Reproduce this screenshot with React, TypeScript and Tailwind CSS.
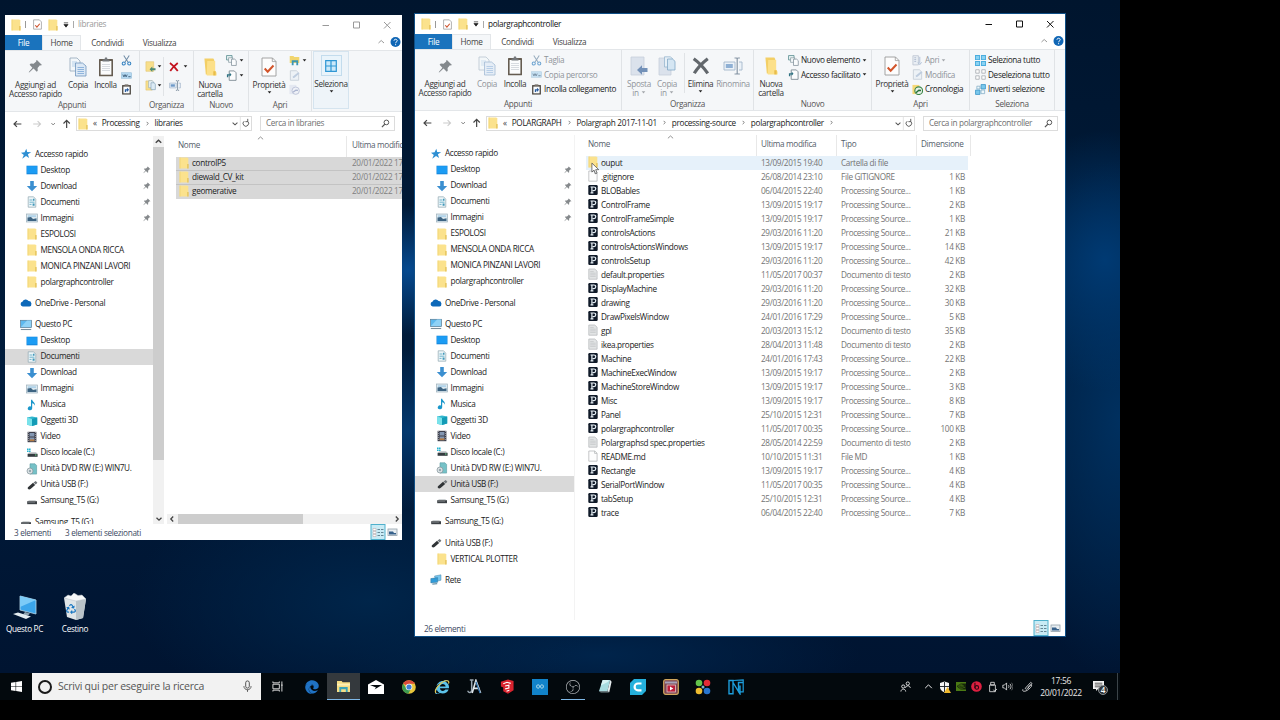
import type { ReactNode } from 'react'
import { FaEdge, FaInternetExplorer, FaRecycle } from 'react-icons/fa'
import { SiNvidia, SiObsstudio } from 'react-icons/si'

type IconName =
  | 'star' | 'desktop' | 'download' | 'document' | 'pictures' | 'folder' | 'cloud' | 'pc'
  | 'music' | 'cube' | 'video' | 'disk' | 'dvd' | 'usb' | 'drive' | 'network'
  | 'pde' | 'text' | 'blank'

function Icon({ name }: { name: IconName }) {
  const art: Record<IconName, ReactNode> = {
    star: <path d="M6.3.8 7.2 4l4 .2-3.3 2 1.2 3.9L6 8 2.2 10.7 3.8 6.9 1 4.8l3.6-.6z" fill="#2e8fd3" />,
    desktop: <><rect x="0.5" y="1.700" width="11" height="8.600" fill="#1787dc" /><rect x="1" y="2.2" width="10" height="7" fill="#1b9cf4" /></>,
    download: <path d="M4.2 1h3.6v5h3.4L6 11.2.8 6h3.4z" fill="#3b8fd0" />,
    document: <><path d="M2.2.8h5.4l2.2 2.4v8H2.2z" fill="#edf5f8" stroke="#8fa7b1" strokeWidth=".7" /><path d="M3.5 4h3M3.5 6.2h5M3.5 8.4h2" stroke="#6fb4cc" strokeWidth="1" /><path d="M6.6 7.4h2v2.4h-2zM7 2.8h1.5v2H7z" fill="#4197b8" /></>,
    pictures: <><rect x=".5" y="2" width="11" height="8" fill="#dce9f0" stroke="#9cb0bb" strokeWidth=".7" /><path d="M1.5 5.5 5 5l2 2 3.5-.8V9h-9z" fill="#3d6482" /><path d="M2 3.5h8v1.2H2z" fill="#9cc9e6" /></>,
    folder: <><path d="M1.600.6H9.300l1 1v9.900H1.600z" fill="#fbe28d" /><path d="M9.200 7h1.400v4.500H9.200z" fill="#e5c35a" /><path d="M1.600.6h.9v10.900h-.9z" fill="#f2d576" /></>,
    cloud: <path d="M2.7 9.5a2.4 2.4 0 0 1-.3-4.7A3.5 3.5 0 0 1 8.6 4a2.8 2.8 0 0 1 .8 5.5z" fill="#0d69b9" />,
    pc: <><rect x=".6" y="1.3" width="10.8" height="7.2" fill="#5db9ee" stroke="#5a7d94" strokeWidth=".7" /><path d="m1 8 6-6.4h4V8z" fill="#8fd2f6" /><path d="M.8 10.5h10.4" stroke="#7a8e9a" strokeWidth="1.1" /></>,
    music: <path d="M5 .8h1.2c.2 2 3.5 2.6 2.6 6-.3-1.6-1.4-2.3-2.6-2.5v5a2.2 2 0 1 1-1.2-1.8z" fill="#1a97cb" />,
    cube: <><path d="m1 2.5 5-1 5.2 1v7L6 11 1 9.8z" fill="#33b7cf" /><path d="M1 2.5 6 4v7L1 9.8z" fill="#79e2ea" /><path d="m6 4 5.2-1.5v7L6 11z" fill="#139bb6" /></>,
    video: <><rect x="1.6" y=".8" width="8.8" height="10.4" fill="#3d3f4c" /><path d="M3.6 2h4.8v3.4H3.6zM3.6 6.4h4.8v3.8H3.6z" fill="#8397b2" /><path d="M3.6 8.4h4.8v1.8H3.6z" fill="#b47a42" /><path d="M2.5 1v10M9.5 1v10" stroke="#c9c9cf" strokeWidth=".6" strokeDasharray="1 1" /></>,
    disk: <><path d="M1 1.5h1.6v1.6H1zM3 1.5h1.6v1.6H3zM1 3.5h1.6v1.6H1zM3 3.5h1.6v1.6H3z" fill="#22b2cf" /><path d="m2.5 6 1-.8h6.6l1 1.6H2z" fill="#b7bec2" /><path d="M1.6 6.8h10v3h-10z" fill="#343b40" /><path d="M9 8h1.5" stroke="#6de08b" /></>,
    dvd: <><path d="M4 .8h5l1.6 1.7v8.6H4z" fill="#75c1c7" stroke="#5c9aa3" strokeWidth=".6" /><circle cx="4" cy="8" r="3" fill="#d7dee2" stroke="#83939a" strokeWidth=".7" /><circle cx="4" cy="8" r="1" fill="#82979e" /></>,
    usb: <><path d="M2 8.200 7 3.700l2.200 2.200-4.700 4.200C2.900 11.100.8 9.600 2 8.200z" fill="#2f3336" /><path d="m7.500 3.400 2.200-1.300 1.700 1.700-1.700 1.800z" fill="#70767a" /></>,
    drive: <><path d="m2 5.8 1-.9h6.2l1 .9z" fill="#bfc4c7" /><path d="M1.2 6.2h9.8v3H1.2z" fill="#3c4145" /><path d="M2 7.3h7" stroke="#8c9194" strokeWidth=".6" /></>,
    network: <><path d="M4.5 2 11 .8v5.4L6 7.5z" fill="#76c5ee" stroke="#5089a8" strokeWidth=".5" /><path d="m.8 4.6 6.8-1v4.7L.8 8.9z" fill="#2f9bd9" stroke="#3c799b" strokeWidth=".5" /><path d="M2.3 10.2 7.2 9.6" stroke="#6a95ac" strokeWidth="1.2" /></>,
    pde: <><rect x="1.300" y="1" width="9.400" height="10" rx="1.2" fill="#101a28" /><path d="M3.5 3h3.3c2.6 0 2.6 3.6 0 3.6H5.7M4.9 3v5.8M3.5 8.9h2.9" fill="none" stroke="#e9f2f8" strokeWidth="1.2" /></>,
    text: <><path d="M1.8 1h6l2.3 2.2v8H1.8z" fill="#e2e4e5" stroke="#b3b6b8" strokeWidth=".7" /><path d="M3.2 3.6h3.5M3.2 5.2h5.5M3.2 6.8h5.5M3.2 8.4h5.5" stroke="#babdc0" strokeWidth=".6" /></>,
    blank: <path d="M1.8 1h6l2.3 2.2v8H1.8zM7.6 1v2.4h2.4" fill="#fdfdfd" stroke="#adb0b2" strokeWidth=".7" />,
  }
  return <svg viewBox="0 0 12 12" className="size-[12px] shrink-0">{art[name]}</svg>
}

const Caret = ({ className = 'text-[#222]' }: { className?: string }) => (
  <svg viewBox="0 0 6 4" className={`w-[5px] h-[3px] shrink-0 ${className}`}><path d="M.6.3h4.8L3 3.4z" fill="currentColor" /></svg>
)

const Pin = ({ className }: { className: string }) => (
  <svg viewBox="0 0 16 16" className={`shrink-0 ${className}`}>
    <path d="m9.5 1 5.4 5.4-1.4.5-.8-.2-2.5 2.8.2 2.9-1.1 1.2-3.4-3.4L1.6 14l-.8.3.3-.8 3.6-4.3-3-3L3 4.900l3 .2 2.800-2.500-.2-.8z" fill="currentColor" />
  </svg>
)

const CopyArt = ({ faded }: { faded?: boolean }) => (
  <svg viewBox="0 0 18 20" className={`w-[18px] h-[20px] ${faded ? 'opacity-60' : ''}`}>
    <path d="M1 1h7l3 3v10H1z" fill="#f3f7fa" stroke="#93a7ba" strokeWidth=".8" />
    <path d="M3 5h5M3 7h5M3 9h5" stroke="#9fc1e2" strokeWidth=".7" />
    <path d="M6.500 6h7l3.500 3v10H6.500z" fill="#dbe8f5" stroke="#6f94bd" strokeWidth=".8" />
    <path d="M8.500 10.500h6.500M8.500 12.500h6.500M8.500 14.500h6.500M8.500 16.500h6.500" stroke="#86aed9" strokeWidth=".9" />
  </svg>
)

const PasteArt = () => (
  <svg viewBox="0 0 16 20" className="w-[16px] h-[20px]">
    <rect x="1" y="2" width="14" height="17.300" rx=".6" fill="#655c51" />
    <rect x="2.600" y="4" width="10.800" height="13.700" fill="#fbfcfd" />
    <path d="M4.500 2.500h2L7 .6h2l.5 1.900h2v2h-7z" fill="#75797d" />
    <path d="M4 7.500h8M4 9.500h8M4 11.500h8M4 13.500h8" stroke="#c7cdd2" strokeWidth=".7" />
  </svg>
)

const NewFolderArt = () => (
  <svg viewBox="0 0 16 20" className="w-[15px] h-[20px]">
    <path d="M1.500 1h9.500l1 1.500V18H3z" fill="#f3cf66" />
    <path d="M4.500 3.500H13V14l1.500 2v3H4z" fill="#fce089" />
    <path d="M11 14.500h2.500V19H11z" fill="#e8bd4a" />
  </svg>
)

const PropertiesArt = () => (
  <svg viewBox="0 0 16 20" className="w-[16px] h-[20px]">
    <path d="M1 1h10.500L15 4.500V19H1z" fill="#fdfdfd" stroke="#9a9a9a" strokeWidth=".9" />
    <path d="M11.300 1v3.600H15" fill="none" stroke="#9a9a9a" strokeWidth=".8" />
    <path d="m3.700 11.500 3 3.200 5.800-6.200" fill="none" stroke="#d2542a" strokeWidth="2" />
  </svg>
)

const MoveArt = () => (
  <svg viewBox="0 0 18 20" className="w-[18px] h-[20px]">
    <path d="M1 1h13v18H1z" fill="#dbe2ec" stroke="#c6cfdc" strokeWidth=".8" />
    <path d="m7 14 5-4.800v2.800h5.500v4H12v2.800z" fill="#7391b8" />
  </svg>
)

const CopyToArt = () => (
  <svg viewBox="0 0 18 20" className="w-[18px] h-[20px]">
    <path d="M1 2h12v17H1z" fill="#dbe2ec" stroke="#c6cfdc" strokeWidth=".8" />
    <path d="M6.500.8h6l2 2V11h-8z" fill="#e7f0f7" stroke="#98b6ce" strokeWidth=".8" />
    <path d="M9.500 3h5l2.500 2.300V14H9.500z" fill="#d5e6f3" stroke="#83a8c6" strokeWidth=".8" />
  </svg>
)

const DeleteArt = ({ className }: { className: string }) => (
  <svg viewBox="0 0 16 16" className={className}><path d="M1.500 1.500c5 3.500 9 8 12.500 13M14 1.500C9.500 5 5 9.500 2 14.500" fill="none" stroke="currentColor" strokeWidth="2.800" /></svg>
)

const RenameArt = ({ className }: { className: string }) => (
  <svg viewBox="0 0 20 18" className={className}>
    <path d="M1 5h11v8H1zM16 5h3v8h-3" fill="#eaf1f8" stroke="#8ba3bd" strokeWidth=".9" />
    <path d="M2.800 7h7v4h-7z" fill="#6e99c8" />
    <path d="M11.500 1h2l.7.700.7-.7h2M11.500 17h2l.7-.7.7.7h2M14.200 1.700v14.600" fill="none" stroke="#66798d" strokeWidth="1.200" />
  </svg>
)

type SmallName =
  | 'cut' | 'path' | 'pasteLink' | 'newItem' | 'easyAccess' | 'open' | 'openFolder' | 'edit' | 'history'
  | 'historyOff' | 'selectAll' | 'selectNone' | 'invert' | 'move' | 'copyTo'

function SmallArt({ name, className = 'size-[11px]' }: { name: SmallName; className?: string }) {
  const art: Record<SmallName, ReactNode> = {
    cut: <><path d="M3 .5 7.600 7.600M9 .5 4.400 7.600" stroke="#6e8ba5" strokeWidth="1.100" /><circle cx="3" cy="9.300" r="1.700" fill="none" stroke="#2f7fc0" strokeWidth="1.100" /><circle cx="9" cy="9.300" r="1.700" fill="none" stroke="#2f7fc0" strokeWidth="1.100" /></>,
    path: <><rect x=".5" y="3" width="11" height="6" fill="#b5d8f1" stroke="#8fb8d6" strokeWidth=".6" /><path d="m2 5 1.200 2.500L4.400 5l1.200 2.500L6.800 5M8 7.300h2.500" fill="none" stroke="#33536e" strokeWidth=".9" /></>,
    pasteLink: <><rect x="1.200" y="1.200" width="9.600" height="10.300" fill="#4a443d" /><rect x="2.600" y="2.800" width="6.800" height="7.400" fill="#f8fbfd" /><path d="M4 .4h4v1.800H4z" fill="#77716a" /><path d="M4.200 8.800V5.600h2.300V4l2.300 2.400-2.300 2.300V7.200H5.600v1.600z" fill="#2a5da0" /></>,
    newItem: <><path d="M.6.6h6v4.800h-6z" fill="#e9f3f3" stroke="#5b8f92" strokeWidth=".9" /><path d="M2.800 3h4.500v5H2.800z" fill="#f4f8fa" stroke="#7c9098" strokeWidth=".7" /><path d="M6 4.500h3.500l1.700 1.700v5.200H6z" fill="#fafcfd" stroke="#7b8b95" strokeWidth=".8" /></>,
    easyAccess: <><path d="M3.500 1h5.500l2 2v8.300H3.500z" fill="#fbfcfd" stroke="#75838c" strokeWidth=".9" /><path d="M1 8V4.500h3V2.800L6 5.200 4 7.400V6H2.500v2z" fill="#2f7282" /></>,
    open: <><path d="M1 .8h6v10H1z" fill="#e5ebf2" stroke="#9daabd" strokeWidth=".8" /><path d="M2.500 3h2M2.500 5h2M2.500 7h2" stroke="#8fa1bc" strokeWidth="1" /><path d="M8.500 2v7M6.500 8l2 2.500 2-2.500" fill="none" stroke="#8ca4c6" strokeWidth="1" /></>,
    openFolder: <><path d="M.8 1h4l1 1.300h5.400v6.500H.8z" fill="#f1d56d" /><path d="M3 5.600h7v5.600H8V8H5v3.200H3z" fill="#3c97b4" /></>,
    edit: <><path d="M1.500.8h6.500l2.500 2.400v8H1.500z" fill="#eaf0f6" stroke="#a8b5c2" strokeWidth=".8" /><path d="m4 9 .6-2.200L10 2.500l1.400 1.400L6 8.400z" fill="#a8bcd5" /></>,
    history: <><path d="M.5 1h7.500v10H.5z" fill="#f6d876" /><circle cx="7.300" cy="7.300" r="4.200" fill="#e9f1ea" stroke="#3b8649" strokeWidth="1.200" /><path d="M4.300 9.500 7.500 6.800l2.300.2" fill="none" stroke="#237135" strokeWidth="1.600" /></>,
    historyOff: <><path d="M.5 1h7.500v10H.5z" fill="#dde2ee" /><circle cx="7.300" cy="7.300" r="4" fill="#eceff7" stroke="#a4adca" strokeWidth="1" /><path d="M4.300 9 7.500 6.800l2.300.2" fill="none" stroke="#8d9abf" strokeWidth="1.400" /></>,
    selectAll: <><path d="M0 0h5.500v5.500H0zM6.500 0H12v5.500H6.500zM0 6.500h5.500V12H0zM6.500 6.500H12V12H6.500z" fill="#4badde" /><path d="M1 1h3.500v3.500H1zM7.500 1H11v3.500H7.500zM1 7.500h3.500V11H1zM7.500 7.500H11V11H7.500z" fill="#8bd2f2" /></>,
    selectNone: <path d="M.8.8h3.800v3.800H.8zM7.400.8h3.800v3.800H7.400zM.8 7.400h3.800v3.800H.8zM7.400 7.400h3.800v3.800H7.400z" fill="#fdfdfd" stroke="#9fa5aa" strokeWidth=".8" />,
    invert: <><path d="M6.600.6h4.800v4.800H6.600zM.6 6.600h4.800v4.800H.6z" fill="#7ac8ec" stroke="#3f98c9" strokeWidth=".9" /><path d="M2 2.400h3.400v3H2zM6.600 6.600h3.900v3.900H6.600z" fill="#eef7fb" stroke="#7eaac3" strokeWidth=".8" /></>,
    move: <><path d="M1 .8h8.500v10.400H1z" fill="#f8df8b" stroke="#dfc16a" strokeWidth=".6" /><path d="m5 9 3-3v1.800h3.500v2.400H8V12z" fill="#4b8a77" /></>,
    copyTo: <><path d="M1 1h7v10H1z" fill="#f8df8b" stroke="#dfc16a" strokeWidth=".6" /><path d="M4 .8h4l1.500 1.700v6H4z" fill="#edf4f8" stroke="#8fa9b8" strokeWidth=".7" /><path d="M6.500 3H10l1.300 1.500v6H6.500z" fill="#dcebf5" stroke="#7f9db3" strokeWidth=".7" /></>,
  }
  return <svg viewBox="0 0 12 12" className={`shrink-0 ${className}`}>{art[name]}</svg>
}

const GridArt = () => (
  <div className="flex size-[21px] items-center justify-center border border-[#c3dced] bg-[#e9f4fb]">
    <svg viewBox="0 0 12 12" className="size-[12px]"><path d="M.7.7h10.600v10.600H.7zM6 .7v10.600M.7 6h10.600" fill="#cbe9fa" stroke="#2f97d4" strokeWidth="1.200" /></svg>
  </div>
)

function BigButton({ art, lines, width, faded, caret, tailCaret }: {
  art: ReactNode; lines: string[]; width: string; faded?: boolean; caret?: boolean; tailCaret?: boolean
}) {
  return (
    <div className={`flex shrink-0 flex-col items-center ${width} ${faded ? 'text-[#8f9499]' : 'text-[#333]'}`}>
      <div className="flex h-[26px] items-center justify-center">{art}</div>
      {lines.map((line, i) => (
        <div key={line} className="flex h-[9px] items-center gap-[2px] leading-[9px] whitespace-nowrap">
          {line}
          {tailCaret && i === lines.length - 1 ? <Caret className="text-[#a3a7ab]" /> : null}
        </div>
      ))}
      {caret ? <div className="flex h-[7px] items-center"><Caret /></div> : null}
    </div>
  )
}

function SmallRow({ icon, label, faded, caret }: { icon: SmallName; label?: string; faded?: boolean; caret?: boolean }) {
  return (
    <div className={`flex h-[14.600px] items-center gap-[2px] whitespace-nowrap ${faded ? 'text-[#8f9499]' : 'text-[#222]'}`}>
      <div className={faded ? 'opacity-70' : ''}><SmallArt name={icon} /></div>
      {label}
      {caret ? <Caret className={faded ? 'text-[#a3a7ab]' : 'text-[#222]'} /> : null}
    </div>
  )
}

function Group({ label, width, children }: { label: string; width: string; children: ReactNode }) {
  return (
    <div className={`flex h-full shrink-0 flex-col border-r border-[#e0e3e6] ${width}`}>
      <div className="flex flex-1 pt-[3px]">{children}</div>
      <div className="h-[12px] text-center leading-[12px] text-[#555]">{label}</div>
    </div>
  )
}

function LibrariesRibbon() {
  return (
    <>
      <Group label="Appunti" width="w-[135px]">
        <BigButton art={<Pin className="size-[15px] text-[#84898d]" />} lines={['Aggiungi ad', 'Accesso rapido']} width="w-[61px]" />
        <BigButton art={<CopyArt />} lines={['Copia']} width="w-[24px]" />
        <BigButton art={<PasteArt />} lines={['Incolla']} width="w-[31px]" />
        <div className="flex flex-col"><SmallRow icon="cut" /><SmallRow icon="path" /><SmallRow icon="pasteLink" /></div>
      </Group>
      <Group label="Organizza" width="w-[54px]">
        <div className="my-[3px] flex w-[24px] flex-col justify-center gap-[8px] border-r border-[#e0e3e6] pl-[5px]">
          <div className="flex items-center gap-[1px]"><SmallArt name="move" /><Caret /></div>
          <div className="flex items-center gap-[1px]"><SmallArt name="copyTo" /><Caret /></div>
        </div>
        <div className="flex flex-col justify-center gap-[8px] pl-[5px]">
          <div className="flex items-center gap-[4px]"><DeleteArt className="size-[10px] text-[#c3131f]" /><Caret /></div>
          <RenameArt className="h-[11px] w-[12px]" />
        </div>
      </Group>
      <Group label="Nuovo" width="w-[55px]">
        <BigButton art={<NewFolderArt />} lines={['Nuova', 'cartella']} width="w-[32px]" />
        <div className="flex flex-col"><SmallRow icon="newItem" caret /><SmallRow icon="easyAccess" caret /></div>
      </Group>
      <Group label="Apri" width="w-[63px]">
        <BigButton art={<PropertiesArt />} lines={['Proprietà']} width="w-[40px]" caret />
        <div className="flex flex-col"><SmallRow icon="openFolder" caret /><SmallRow icon="edit" faded /><SmallRow icon="historyOff" faded /></div>
      </Group>
      <div className="ml-px h-[58px] w-[36px] self-start border border-[#d5e4ef] bg-[#eef4f9] pt-[1px]">
        <BigButton art={<GridArt />} lines={['Seleziona']} width="w-[34px]" caret />
      </div>
    </>
  )
}

function ControllerRibbon() {
  return (
    <>
      <Group label="Appunti" width="w-[207px]">
        <BigButton art={<Pin className="size-[15px] text-[#84898d]" />} lines={['Aggiungi ad', 'Accesso rapido']} width="w-[60px]" />
        <BigButton art={<CopyArt faded />} lines={['Copia']} width="w-[24px]" faded />
        <BigButton art={<PasteArt />} lines={['Incolla']} width="w-[32px]" />
        <div className="flex flex-col">
          <SmallRow icon="cut" label="Taglia" faded />
          <SmallRow icon="path" label="Copia percorso" faded />
          <SmallRow icon="pasteLink" label="Incolla collegamento" />
        </div>
      </Group>
      <Group label="Organizza" width="w-[132px]">
        <BigButton art={<MoveArt />} lines={['Sposta', 'in']} width="w-[34px]" faded tailCaret />
        <BigButton art={<CopyToArt />} lines={['Copia', 'in']} width="w-[22px]" faded tailCaret />
        <div className="ml-[6px] h-[40px] w-px bg-[#e0e3e6]" />
        <BigButton art={<DeleteArt className="size-[18px] text-[#62676c]" />} lines={['Elimina']} width="w-[31px]" caret />
        <BigButton art={<div className="opacity-75"><RenameArt className="h-[18px] w-[20px]" /></div>} lines={['Rinomina']} width="w-[34px]" faded />
      </Group>
      <Group label="Nuovo" width="w-[118px]">
        <BigButton art={<NewFolderArt />} lines={['Nuova', 'cartella']} width="w-[34px]" />
        <div className="flex flex-col"><SmallRow icon="newItem" label="Nuovo elemento" caret /><SmallRow icon="easyAccess" label="Accesso facilitato" caret /></div>
      </Group>
      <Group label="Apri" width="w-[98px]">
        <BigButton art={<PropertiesArt />} lines={['Proprietà']} width="w-[40px]" caret />
        <div className="flex flex-col"><SmallRow icon="open" label="Apri" faded caret /><SmallRow icon="edit" label="Modifica" faded /><SmallRow icon="history" label="Cronologia" /></div>
      </Group>
      <Group label="Seleziona" width="w-[85px]">
        <div className="flex flex-col pl-[5px]"><SmallRow icon="selectAll" label="Seleziona tutto" /><SmallRow icon="selectNone" label="Deseleziona tutto" /><SmallRow icon="invert" label="Inverti selezione" /></div>
      </Group>
    </>
  )
}

function TitleBar({ title, active }: { title: string; active?: boolean }) {
  return (
    <div className="flex h-[20px] shrink-0 items-center pl-[5px]">
      <Icon name="folder" />
      <div className="ml-[3px] h-[7px] w-px bg-[#999]" />
      <svg viewBox="0 0 12 14" className="ml-[7px] h-[11px] w-[9px]"><path d="M.8.8h7.700l2.700 2.700v9.700H.8z" fill="#fff" stroke="#8a8a8a" strokeWidth=".9" /><path d="m3 8 2.200 2.500L9 6" fill="none" stroke="#cf5530" strokeWidth="1.500" /></svg>
      <div className="ml-[5px]"><Icon name="folder" /></div>
      <svg viewBox="0 0 6 7" className="ml-[4px] h-[6px] w-[6px]"><path d="M.5 1h5M.6 3h4.800L3 6z" fill="#222" stroke="#222" strokeWidth=".8" /></svg>
      <div className="ml-[4px] h-[7px] w-px bg-[#aaa]" />
      <span className={`ml-[4px] ${active ? 'text-[#111]' : 'text-[#999]'}`}>{title}</span>
      <svg viewBox="0 0 70 10" className={`mr-[10px] ml-auto h-[10px] w-[70px] ${active ? 'text-[#111]' : 'text-[#999]'}`}>
        <path d="M.5 5.500H7M31.500 2h6v6h-6zM62 2l6.500 6.500M68.500 2 62 8.500" fill="none" stroke="currentColor" strokeWidth="1" />
      </svg>
    </div>
  )
}

function TabBar() {
  return (
    <div className="flex h-[15px] shrink-0 items-stretch leading-[16px] text-[#444]">
      <div className="w-[37px] bg-[#1a73bd] text-center text-white">File</div>
      <div className="w-[39px] border-x border-[#e3e6e9] border-t bg-[#f5f7f9] text-center leading-[14px]">Home</div>
      <div className="w-[53px] text-center">Condividi</div>
      <div className="w-[51px] text-center">Visualizza</div>
      <svg viewBox="0 0 24 12" className="mt-[1px] mr-[1px] ml-auto h-[12px] w-[24px]">
        <path d="m1.500 7 2.700-2.500L7 7" fill="none" stroke="#999" />
        <circle cx="18.500" cy="6" r="5" fill="#1066b5" />
        <path d="M17 4.700c0-2 3.200-1.900 3.200 0 0 1.200-1.600 1.200-1.600 2.500M18.600 8.200v1" fill="none" stroke="#fff" strokeWidth="1" />
      </svg>
    </div>
  )
}

function AddressBar({ crumbs, trailing, search, boxWidth, searchWidth }: {
  crumbs: string[]; trailing?: boolean; search: string; boxWidth: string; searchWidth: string
}) {
  return (
    <div className="flex h-[24px] shrink-0 items-center">
      <svg viewBox="0 0 64 12" className="ml-[8px] h-[12px] w-[63px]" fill="none">
        <path d="M8.500 6H1M4 3 1 6l3 3" stroke="#444" strokeWidth="1.200" />
        <path d="M20.500 6H28M25 3l3 3-3 3" stroke="#ccc" strokeWidth="1.100" />
        <path d="m39 5 1.800 2L42.600 5" stroke="#888" />
        <path d="M54.500 10V2.500M51.300 5.500l3.200-3.200 3.200 3.200" stroke="#444" strokeWidth="1.200" />
      </svg>
      <div className={`flex h-[15px] items-center border border-[#dcdcdc] text-[#1b1b1b] ${boxWidth}`}>
        <Icon name="folder" />
        <span className="mr-[5px] ml-[4px] text-[#444]">«</span>
        {crumbs.map((crumb, i) => (
          <span key={crumb} className="flex items-center whitespace-nowrap">
            {crumb}
            {i < crumbs.length - 1 || trailing ? (
              <svg viewBox="0 0 4 6" className="mx-[6px] h-[5px] w-[3px]"><path d="M.8.8 3 3 .8 5.200" fill="none" stroke="#555" strokeWidth="1" /></svg>
            ) : null}
          </span>
        ))}
        <svg viewBox="0 0 22 14" className="ml-auto h-[13px] w-[21px]" fill="none">
          <path d="m2.500 6 2.600 2.500L7.700 6" stroke="#555" strokeWidth="1.100" /><path d="M10.800 0v14" stroke="#e2e2e2" />
          <path d="M15 4.500a3 3 0 1 0 3.500 0M18.800 2v3h-2.500" stroke="#555" strokeWidth="1" />
        </svg>
      </div>
      <div className={`ml-[8px] flex h-[15px] items-center border border-[#dcdcdc] pr-[4px] pl-[5px] text-[#6f6f6f] ${searchWidth}`}>
        <span className="whitespace-nowrap">{search}</span>
        <svg viewBox="0 0 10 10" className="ml-auto size-[9px] shrink-0"><circle cx="6" cy="3.800" r="2.600" fill="none" stroke="#555" strokeWidth="1.100" /><path d="M4.200 5.800 1 9" stroke="#555" strokeWidth="1.300" /></svg>
      </div>
    </div>
  )
}

type NavItem = { icon: IconName; label: string; pinned?: boolean; root?: boolean }

const quickAccess: NavItem[] = [
  { icon: 'star', label: 'Accesso rapido', root: true },
  { icon: 'desktop', label: 'Desktop', pinned: true },
  { icon: 'download', label: 'Download', pinned: true },
  { icon: 'document', label: 'Documenti', pinned: true },
  { icon: 'pictures', label: 'Immagini', pinned: true },
  { icon: 'folder', label: 'ESPOLOSI' },
  { icon: 'folder', label: 'MENSOLA ONDA RICCA' },
  { icon: 'folder', label: 'MONICA PINZANI LAVORI' },
  { icon: 'folder', label: 'polargraphcontroller' },
]

const thisPc: NavItem[] = [
  { icon: 'pc', label: 'Questo PC', root: true },
  { icon: 'desktop', label: 'Desktop' },
  { icon: 'document', label: 'Documenti' },
  { icon: 'download', label: 'Download' },
  { icon: 'pictures', label: 'Immagini' },
  { icon: 'music', label: 'Musica' },
  { icon: 'cube', label: 'Oggetti 3D' },
  { icon: 'video', label: 'Video' },
  { icon: 'disk', label: 'Disco locale (C:)' },
  { icon: 'dvd', label: 'Unità DVD RW (E:) WIN7U.' },
  { icon: 'usb', label: 'Unità USB (F:)' },
  { icon: 'drive', label: 'Samsung_T5 (G:)' },
]

const baseSections: NavItem[][] = [
  quickAccess,
  [{ icon: 'cloud', label: 'OneDrive - Personal', root: true }],
  thisPc,
  [{ icon: 'drive', label: 'Samsung_T5 (G:)', root: true }],
]

const controllerSections: NavItem[][] = [
  ...baseSections,
  [{ icon: 'usb', label: 'Unità USB (F:)', root: true }, { icon: 'folder', label: 'VERTICAL PLOTTER' }],
  [{ icon: 'network', label: 'Rete', root: true }],
]

function NavPane({ sections, selected, width }: { sections: NavItem[][]; selected: string; width: string }) {
  return (
    <div className={`flex shrink-0 flex-col gap-[5.300px] overflow-hidden pt-[10.500px] text-[#1b1b1b] ${width}`}>
      {sections.map((items, s) => (
        <div key={s} className="shrink-0">
          {items.map((item) => (
            <div
              key={item.label}
              className={`flex h-[16px] items-center gap-[3px] pr-[2px] whitespace-nowrap ${item.root ? 'pl-[15px]' : 'pl-[20.500px]'} ${s === 2 && item.label === selected ? 'bg-[#d9d9d9]' : ''}`}
            >
              <Icon name={item.icon} />
              {item.label}
              {item.pinned ? <Pin className="ml-auto size-[8px] text-[#85898c]" /> : null}
            </div>
          ))}
        </div>
      ))}
    </div>
  )
}

const processing = 'Processing Source...'
const textDoc = 'Documento di testo'

const files: [IconName, string, string, string, string][] = [
  ['folder', 'ouput', '13/09/2015 19:40', 'Cartella di file', ''],
  ['blank', '.gitignore', '26/08/2014 23:10', 'File GITIGNORE', '1 KB'],
  ['pde', 'BLOBables', '06/04/2015 22:40', processing, '1 KB'],
  ['pde', 'ControlFrame', '13/09/2015 19:17', processing, '2 KB'],
  ['pde', 'ControlFrameSimple', '13/09/2015 19:17', processing, '1 KB'],
  ['pde', 'controlsActions', '29/03/2016 11:20', processing, '21 KB'],
  ['pde', 'controlsActionsWindows', '13/09/2015 19:17', processing, '14 KB'],
  ['pde', 'controlsSetup', '29/03/2016 11:20', processing, '42 KB'],
  ['text', 'default.properties', '11/05/2017 00:37', textDoc, '2 KB'],
  ['pde', 'DisplayMachine', '29/03/2016 11:20', processing, '32 KB'],
  ['pde', 'drawing', '29/03/2016 11:20', processing, '30 KB'],
  ['pde', 'DrawPixelsWindow', '24/01/2016 17:29', processing, '5 KB'],
  ['text', 'gpl', '20/03/2013 15:12', textDoc, '35 KB'],
  ['text', 'ikea.properties', '28/04/2013 11:48', textDoc, '2 KB'],
  ['pde', 'Machine', '24/01/2016 17:43', processing, '22 KB'],
  ['pde', 'MachineExecWindow', '13/09/2015 19:17', processing, '2 KB'],
  ['pde', 'MachineStoreWindow', '13/09/2015 19:17', processing, '3 KB'],
  ['pde', 'Misc', '13/09/2015 19:17', processing, '8 KB'],
  ['pde', 'Panel', '25/10/2015 12:31', processing, '7 KB'],
  ['pde', 'polargraphcontroller', '11/05/2017 00:35', processing, '100 KB'],
  ['text', 'Polargraphsd spec.properties', '28/05/2014 22:59', textDoc, '2 KB'],
  ['blank', 'README.md', '10/10/2015 11:31', 'File MD', '1 KB'],
  ['pde', 'Rectangle', '13/09/2015 19:17', processing, '4 KB'],
  ['pde', 'SerialPortWindow', '11/05/2017 00:35', processing, '4 KB'],
  ['pde', 'tabSetup', '25/10/2015 12:31', processing, '4 KB'],
  ['pde', 'trace', '06/04/2015 22:40', processing, '7 KB'],
]

const SortMark = () => (
  <svg viewBox="0 0 8 4" className="absolute top-0 left-[81px] h-[4px] w-[7px]"><path d="m1 3.500 3-2.700 3 2.700" fill="none" stroke="#777" strokeWidth=".9" /></svg>
)

function ControllerFiles() {
  return (
    <div className="flex-1 border-l border-[#f3f3f3] pl-[11px]">
      <div className="relative grid h-[21px] w-[385px] grid-cols-[171px_80px_80px_54px] leading-[17px] text-[#55606b]">
        <SortMark />
        <div className="border-r border-[#e8e8e8] pl-[2px]">Nome</div>
        <div className="border-r border-[#e8e8e8] pl-[4px]">Ultima modifica</div>
        <div className="border-r border-[#e8e8e8] pl-[4px]">Tipo</div>
        <div className="border-r border-[#e8e8e8] pl-[4px]">Dimensione</div>
      </div>
      {files.map(([icon, name, date, type, size], i) => (
        <div key={name} className={`grid h-[14px] w-[382px] grid-cols-[175px_80px_77px_47px] items-center whitespace-nowrap text-[#747474] ${i === 0 ? 'bg-[#e6f1fa]' : ''}`}>
          <div className="flex items-center gap-[2px] pl-[1px] text-[#1b1b1b]"><div className="-mt-px"><Icon name={icon} /></div>{name}</div>
          <div>{date}</div>
          <div>{type}</div>
          <div className="text-right">{size}</div>
        </div>
      ))}
    </div>
  )
}

function LibraryFiles() {
  return (
    <div className="flex flex-1 flex-col overflow-hidden">
      <div className="ml-[12px] flex-1">
        <div className="relative grid h-[21px] grid-cols-[171px_1fr] leading-[17px] text-[#55606b]">
          <SortMark />
          <div className="border-r border-[#e8e8e8] pl-[2px]">Nome</div>
          <div className="overflow-hidden pl-[5px] whitespace-nowrap">Ultima modifica</div>
        </div>
        {['controlP5', 'diewald_CV_kit', 'geomerative'].map((name) => (
          <div key={name} className="grid h-[14px] grid-cols-[176px_1fr] items-center border-b border-[#c3c3c3] bg-[#d8d8d8] last:border-b-0">
            <div className="flex items-center gap-[2px] pl-[2px] text-[#1b1b1b]"><Icon name="folder" />{name}</div>
            <div className="overflow-hidden whitespace-nowrap text-[#808080]">20/01/2022 17:5</div>
          </div>
        ))}
      </div>
      <div className="ml-[3px] flex h-[10px] items-center justify-between bg-[#f1f1f1]">
        <svg viewBox="0 0 10 10" className="size-[10px]"><path d="M6.200 2.500 3.800 5l2.400 2.500" fill="none" stroke="#444" strokeWidth="1.300" /></svg>
        <div className="mr-auto ml-px h-full w-[125px] bg-[#cdcdcd]" />
        <svg viewBox="0 0 10 10" className="size-[10px]"><path d="M3.800 2.500 6.200 5 3.800 7.500" fill="none" stroke="#444" strokeWidth="1.300" /></svg>
      </div>
    </div>
  )
}

function StatusBar({ items }: { items: string[] }) {
  return (
    <div className="flex h-[16px] shrink-0 items-center gap-[14px] pl-[9px] text-[#3d4a63]">
      {items.map((item) => <span key={item} className="pt-[2px]">{item}</span>)}
      <svg viewBox="0 0 28 16" className="mr-[3px] ml-auto h-[16px] w-[29px]">
        <rect x=".5" y=".5" width="14" height="15" fill="#c9ebf5" stroke="#4fb0cc" />
        <path d="M2.500 4.500h3v2h-3zM2.500 7.500h3v2h-3zM2.500 10.500h3v2h-3z" fill="#fff" stroke="#b08c8c" strokeWidth=".4" />
        <path d="M7 5.500h2.500M10.500 5.500H13M7 8.500h2.500M10.500 8.500H13M7 11.500h2.500M10.500 11.500H13" stroke="#4b6d7d" strokeWidth=".8" />
        <rect x="17.500" y="5" width="9" height="6.500" fill="#e7edf1" stroke="#93a1ab" strokeWidth=".8" />
        <path d="M18.500 7.500h4l1 1.500h2v1.500h-7z" fill="#37618b" />
      </svg>
    </div>
  )
}

function VerticalScroll() {
  return (
    <div className="flex w-[11px] shrink-0 flex-col items-center bg-[#f1f1f1]">
      <svg viewBox="0 0 10 10" className="size-[11px]"><path d="M2.500 6.200 5 3.800l2.500 2.400" fill="none" stroke="#444" strokeWidth="1.300" /></svg>
      <div className="h-[313px] w-full bg-[#cdcdcd]" />
      <svg viewBox="0 0 10 10" className="mt-auto size-[10px]"><path d="M2.500 3.800 5 6.200l2.500-2.400" fill="none" stroke="#444" strokeWidth="1.300" /></svg>
    </div>
  )
}

function TaskButton({ children, className = '' }: { children: ReactNode; className?: string }) {
  return <div className={`flex h-[27px] w-[32.700px] shrink-0 items-center justify-center ${className}`}>{children}</div>
}

function Taskbar() {
  return (
    <div className="flex h-[27px] w-[1120px] items-center bg-[#03090d]">
      <div className="flex w-[32px] justify-center">
        <svg viewBox="0 0 12 12" className="size-[11px]"><path d="m0 1.800 5-.7v4.600H0zM5.600 1 12 0v5.700H5.600zM0 6.300h5V11l-5-.8zM5.600 6.300H12V12l-6.400-1z" fill="#fff" /></svg>
      </div>
      <div className="mr-px flex h-full w-[229px] items-center bg-[#f2f2f2] pl-[6px] text-[10.500px] tracking-[-0.250px] text-[#555]">
        <div className="mr-[6px] size-[14px] rounded-full border-[2px] border-[#1a1a1a]" />
        <span className="pt-px">Scrivi qui per eseguire la ricerca</span>
        <svg viewBox="0 0 10 14" className="mr-[9px] ml-auto h-[13px] w-[9px]" fill="none" stroke="#444"><rect x="3" y=".8" width="4" height="8" rx="2" /><path d="M1 6.500c0 5.500 8 5.500 8 0M5 10.500V13" strokeWidth=".9" /></svg>
      </div>
      <TaskButton className="pr-[2px]">
        <svg viewBox="0 0 12 12" className="size-[11px]" fill="none" stroke="#e8e8e8"><path d="M1 3.500h7v5H1zM1 .5v1.500h7V.5M1 11.500V10h7v1.500M10.800.5v11M10 4.500h1.600" /></svg>
      </TaskButton>
      <TaskButton className="pl-px"><FaEdge className="size-[14px] text-[#1f72c4]" /></TaskButton>
      <TaskButton className="border-b border-[#7fb9e8] bg-[#34393d]">
        <svg viewBox="0 0 16 14" className="h-[13px] w-[15px]"><path d="M1 1h5l1 1.500h8V13H1z" fill="#f6dd84" /><path d="M1 4h14v2H1z" fill="#fdf0b5" /><path d="M3.500 7.500h9V13h-2V10h-5v3h-2z" fill="#3ba4b8" /></svg>
      </TaskButton>
      <TaskButton>
        <svg viewBox="0 0 16 14" className="h-[14px] w-[16px]"><path d="M0 4.500 8 0l8 4.500V14H0z" fill="#fff" /><path d="M2 5h12L6.500 9.500 8 7.500z" fill="#03090d" /></svg>
      </TaskButton>
      <TaskButton>
        <svg viewBox="0 0 16 16" className="size-[14px]"><circle cx="8" cy="8" r="7.800" fill="#e8c63b" /><path d="M8 8 1.200 4.100A7.800 7.800 0 0 1 14.800 4.200H8z" fill="#d94b3d" /><path d="M1.200 4.100A7.800 7.800 0 0 0 7 15.700L10.500 10 6 11z" fill="#3d9b51" /><circle cx="8" cy="8" r="3.800" fill="#f4f4f4" /><circle cx="8" cy="8" r="2.900" fill="#3f7fd5" /></svg>
      </TaskButton>
      <TaskButton>
        <div className="relative"><FaInternetExplorer className="size-[14px] text-[#5cc3ea]" /><svg viewBox="0 0 16 16" className="absolute -top-px -left-px size-[16px]"><path d="M2 14C-1 11 9 0 14 2c1 .5 1 1.500.5 2.500" fill="none" stroke="#e9c64a" strokeWidth="1.100" /></svg></div>
      </TaskButton>
      <TaskButton>
        <svg viewBox="0 0 16 16" className="size-[15px]" fill="none"><path d="M5 1v11c0 3-4 3-4 .5M3 1h4" stroke="#9aa7b2" strokeWidth="1.600" /><path d="m5.500 15 4-13.500 5 13.500M7.500 10h6" stroke="#dfe7ec" strokeWidth="1.700" /><path d="m9.500 3 4.500 12" stroke="#2d6ea8" strokeWidth="1.400" /></svg>
      </TaskButton>
      <TaskButton>
        <svg viewBox="0 0 14 16" className="h-[15px] w-[14px]"><path d="m.5 3 7.500-2.500L14 2v10L8 15.800 3 13V9L.5 8z" fill="#d8232e" /><path d="m3 5 4-1.500 4 1.200M5 7.500l4-.8v3l-4 .8M6.500 13l3-1" fill="none" stroke="#fff" strokeWidth="1.200" /></svg>
      </TaskButton>
      <TaskButton>
        <div className="flex size-[16px] items-center justify-center bg-[#1183ca]"><svg viewBox="0 0 10 6" className="h-[5px] w-[8px]"><path d="M5 3C3-.5.8 1 .8 3S3 6.500 5 3s4.200-2 4.200 0S7 6.500 5 3" fill="none" stroke="#d6f2f5" strokeWidth="1.100" /></svg></div>
      </TaskButton>
      <TaskButton className="relative">
        <SiObsstudio className="size-[14px] text-[#b9bcbf]" />
        <div className="absolute bottom-0 h-px w-[24px] bg-[#7fb9e8]" />
      </TaskButton>
      <TaskButton>
        <svg viewBox="0 0 16 16" className="size-[15px]"><path d="M5 1h8l-3 12H1z" fill="#a7dce0" /><path d="m13 1 1.500 2-2.500 11-2-1z" fill="#e6edef" /><path d="M1 13h9l2 1.500H3z" fill="#7b8d92" /><path d="m5 1-2 6 8-4 .5-2z" fill="#d7f3f4" /></svg>
      </TaskButton>
      <TaskButton>
        <svg viewBox="0 0 16 16" className="size-[16px]"><path d="M4 0h12v12l-4 4H0V4z" fill="#25b0dc" /><path d="M11.500 4.500H8a3.400 3.400 0 0 0 0 6.800h3.500" fill="none" stroke="#fff" strokeWidth="2.200" /></svg>
      </TaskButton>
      <TaskButton>
        <svg viewBox="0 0 16 16" className="size-[16px]"><rect x=".7" y=".7" width="14.600" height="14.600" rx="2" fill="#7c4654" stroke="#d2a85e" strokeWidth="1.200" /><path d="M2 2.500h12v2H2z" fill="#a7a4bb" /><rect x="4" y="6" width="8.500" height="7" fill="#bc1f3a" stroke="#e1c6c6" strokeWidth=".8" /><path d="m7 7.500 3.300 2L7 11.500z" fill="#fff" /></svg>
      </TaskButton>
      <TaskButton>
        <svg viewBox="0 0 16 16" className="size-[16px]"><circle cx="4" cy="4" r="3.300" fill="#63c34b" /><circle cx="12" cy="4" r="3.300" fill="#e32c36" /><circle cx="4" cy="12" r="3.300" fill="#efbd30" /><circle cx="12" cy="12" r="3.300" fill="#2876cf" /><circle cx="8" cy="8" r="1.500" fill="#7db5c9" /></svg>
      </TaskButton>
      <TaskButton>
        <svg viewBox="0 0 16 16" className="size-[16px]" fill="none" stroke="#1d9ddb"><path d="M1 1.500h4v13.300H1zM5 3.500l5.500 9V3.500h4.700M10.500 12.500l1.500 2.300V6.500" strokeWidth="1.400" /><path d="M5 1.500 15.200 1v11.800H12" strokeWidth="1.200" /></svg>
      </TaskButton>

      <div className="ml-auto flex h-full items-center text-[#e8e8e8]">
        <svg viewBox="0 0 12 12" className="mr-[13px] size-[11px]" fill="none" stroke="currentColor"><circle cx="8.500" cy="2.800" r="1.800" /><path d="M6 7.500c.3-3 5-3 5.200 0" /><circle cx="3.500" cy="6" r="1.700" /><path d="M1 11.500C1.200 8 6 8 6.200 11.500" /></svg>
        <svg viewBox="0 0 10 6" className="mr-[6px] h-[5px] w-[9px]" fill="none" stroke="currentColor"><path d="m1 5 4-4 4 4" strokeWidth="1.200" /></svg>
        <svg viewBox="0 0 12 12" className="mr-[5px] size-[12px]"><path d="M5.500.5 10 2v4c0 3-2.500 4.500-4.500 5.500C3.500 10.500 1 9 1 6V2z" fill="#f4f4f4" /><path d="M5.500 1v10M1 5.500h9" stroke="#151b20" strokeWidth=".9" /><path d="m8.500 6 3.500 6H5z" fill="#f0b92d" /></svg>
        <div className="mr-[5px] flex h-[9px] w-[10px] items-center justify-center bg-[#4b7a14]"><SiNvidia className="size-[9px] text-[#16260a]" /></div>
        <svg viewBox="0 0 12 12" className="mr-[6px] size-[11px]"><circle cx="6" cy="6" r="5.800" fill="#dd1f40" /><path d="M4.300 2v5.500" stroke="#2b0710" strokeWidth="1.200" /><circle cx="6.300" cy="7" r="2" fill="none" stroke="#2b0710" strokeWidth="1.200" /></svg>
        <svg viewBox="0 0 10 12" className="mr-[5px] h-[12px] w-[9px]" fill="none" stroke="currentColor"><path d="M3 .8h4v3H3zM1.800 3.800h6.400v7.400H1.800z" strokeWidth=".9" /><path d="m6 9 1.500 1.800L10 8" /></svg>
        <svg viewBox="0 0 12 10" className="mr-[9px] h-[9px] w-[11px]" fill="none" stroke="currentColor" strokeWidth=".9"><path d="M.8 3.500h1.700L5 1v8L2.500 6.500H.8zM7 3.500c.8.800.8 2.200 0 3M8.700 2c1.600 1.600 1.600 4.400 0 6" /><path d="M10.500.8c2 2.400 2 6 0 8.400" opacity=".5" /></svg>
        <svg viewBox="0 0 12 12" className="mr-[6px] size-[11px]" fill="none" stroke="currentColor"><path d="m3.500 8 6-6.500 1.500 1.300-6.200 6.400zM1 9c-1.500 3 3 2.500 5 1s5-4 4.500-5.500c-1-1.500-4 2-3.500 3.500" strokeWidth=".9" /></svg>
        <div className="w-[44px] text-center text-[8.500px] leading-[12px] tracking-[-0.380px]">17:56<br />20/01/2022</div>
        <div className="relative mr-[9px] ml-[9px] h-[14px] w-[16px]">
          <svg viewBox="0 0 16 14" className="h-[14px] w-[16px]"><path d="M1 1h11v8H6l-2 2V9H1z" fill="#f2f2f2" /><path d="M2.800 3.200h7.500M2.800 5h7.500M2.800 6.800h7.500" stroke="#222" strokeWidth=".7" /></svg>
          <div className="absolute top-[5px] left-[6px] flex size-[10px] items-center justify-center rounded-full border border-[#8a8f93] bg-[#2f3539] text-[8px] leading-none font-semibold text-white">4</div>
        </div>
        <div className="mr-[2px] h-full w-px bg-[#3b4449]" />
      </div>
    </div>
  )
}

function DesktopIcons() {
  return (
    <div className="absolute top-[593px] left-[2px] flex text-center text-white">
      <div className="flex w-[45px] flex-col items-center gap-[2px]">
        <svg viewBox="0 0 28 28" className="size-[28px]"><path d="m9 3 16 4v14L9 17z" fill="#3ba5ea" stroke="#b9d9ea" strokeWidth=".8" /><path d="m9 3 16 4L9 14z" fill="#7ccbf7" /><path d="m14 19 5 1.500-2 2-5-1z" fill="#8ea2af" /><path d="m2 21 5-1.500 13 4L15 26z" fill="#e3ecf1" /></svg>
        <span>Questo PC</span>
      </div>
      <div className="flex w-[56px] flex-col items-center gap-[2px]">
        <div className="relative flex size-[28px] items-center justify-center">
          <svg viewBox="0 0 28 28" className="size-[28px]"><path d="m3 5 22 1-3 19-7 2-9-3z" fill="#dfe5e8" /><path d="m15 8 10-2-3 19-7 2z" fill="#b9c3c9" /><path d="m3 5 4-3 3 1 3-3 4 2.500L21 2l4 4-10 2z" fill="#f6f8f9" stroke="#b6bfc4" strokeWidth=".5" /></svg>
          <FaRecycle className="absolute top-[11px] left-[5px] size-[10px] text-[#1b78c2]" />
        </div>
        <span>Cestino</span>
      </div>
    </div>
  )
}

export default function App() {
  return (
    <div className="h-[720px] w-[1280px] overflow-hidden bg-black font-['Open_Sans','Noto_Sans',sans-serif] text-[8.200px] tracking-[-0.320px]">
      <div className="relative h-[673px] w-[1120px] overflow-hidden bg-[#001630] bg-[radial-gradient(ellipse_110px_130px_at_1105px_260px,#003a73_0%,transparent_100%),radial-gradient(ellipse_120px_260px_at_1120px_420px,#00305f_0%,transparent_100%),radial-gradient(ellipse_60px_65px_at_408px_270px,#064a90_0%,transparent_100%),radial-gradient(ellipse_60px_80px_at_408px_430px,#04396f_0%,transparent_100%),radial-gradient(ellipse_240px_120px_at_370px_600px,#00254a_0%,transparent_100%),radial-gradient(ellipse_260px_60px_at_600px_655px,#00244b_0%,transparent_100%),linear-gradient(180deg,#00152e_0%,#001c3c_55%,#001431_100%)]">
        <DesktopIcons />

        <div className="absolute top-[14.500px] left-[5px] flex h-[525.500px] w-[397px] flex-col overflow-hidden bg-white">
          <TitleBar title="libraries" />
          <TabBar />
          <div className="flex h-[62px] shrink-0 border-y border-[#e3e6e9] bg-[#f5f7f9]"><LibrariesRibbon /></div>
          <AddressBar crumbs={['Processing', 'libraries']} search="Cerca in libraries" boxWidth="w-[176px]" searchWidth="w-[135px]" />
          <div className="flex min-h-0 flex-1">
            <NavPane sections={baseSections} selected="Documenti" width="w-[148px]" />
            <VerticalScroll />
            <LibraryFiles />
          </div>
          <StatusBar items={['3 elementi', '3 elementi selezionati']} />
        </div>

        <div className="absolute top-[14px] left-[415px] flex h-[622px] w-[650px] flex-col overflow-hidden bg-white outline outline-[#0f4f86]">
          <TitleBar title="polargraphcontroller" active />
          <TabBar />
          <div className="flex h-[62px] shrink-0 border-y border-[#e3e6e9] bg-[#f5f7f9]"><ControllerRibbon /></div>
          <AddressBar
            crumbs={['POLARGRAPH', 'Polargraph 2017-11-01', 'processing-source', 'polargraphcontroller']}
            trailing
            search="Cerca in polargraphcontroller"
            boxWidth="w-[429px]"
            searchWidth="w-[135px]"
          />
          <div className="flex min-h-0 flex-1">
            <NavPane sections={controllerSections} selected="Unità USB (F:)" width="w-[159px]" />
            <ControllerFiles />
          </div>
          <StatusBar items={['26 elementi']} />
        </div>

        <svg viewBox="0 0 10 14" className="absolute top-[162px] left-[591px] h-[13px] w-[9px]"><path d="M1 1v10l2.400-2.200L5 12.800l1.800-.8-1.600-3.700h3.400z" fill="#fff" stroke="#444" strokeWidth=".8" /></svg>
      </div>
      <Taskbar />
    </div>
  )
}
